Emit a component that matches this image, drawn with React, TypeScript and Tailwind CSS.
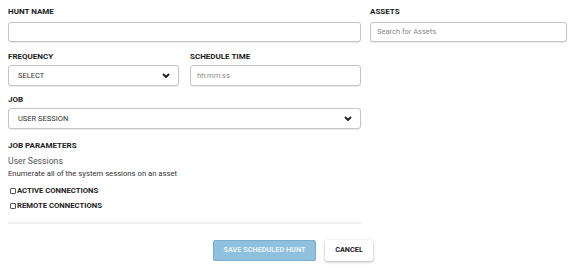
import React from 'react';

const font = { fontFamily: 'Roboto, "Liberation Sans", sans-serif' };

function Label({ children }: { children: React.ReactNode }) {
  return <p className="text-[8px] font-bold uppercase leading-[9px] text-[#222]">{children}</p>;
}

function Chevron() {
  return (
    <svg width="8" height="6" viewBox="0 0 8 6" className="shrink-0">
      <polyline points="1.5,1.5 4,4 6.5,1.5" fill="none" stroke="#222" strokeWidth="1.9" strokeLinecap="round" strokeLinejoin="round" />
    </svg>
  );
}

function SelectBox({ value, className }: { value: string; className: string }) {
  return (
    <div className={`flex h-[21px] items-center justify-between rounded-[3px] border border-[#c4c4c4] bg-white pl-[9px] pr-[8px] shadow-[0_1px_1px_rgba(0,0,0,0.08)] ${className}`}>
      <span className="text-[7.5px] uppercase text-[#333]">{value}</span>
      <Chevron />
    </div>
  );
}

function TextBox({ placeholder, className }: { placeholder?: string; className: string }) {
  return (
    <div className={`flex h-[20px] items-center rounded-[3px] border border-[#c4c4c4] bg-white px-[6px] shadow-[0_1px_1px_rgba(0,0,0,0.08)] ${className}`}>
      <span className="text-[7.5px] text-[#8a8a8a]">{placeholder}</span>
    </div>
  );
}

function Check({ label }: { label: string }) {
  return (
    <div className="flex items-center gap-[1px]">
      <span className="ml-[2px] h-[6px] w-[6px] rounded-[1px] border border-[#555] bg-white" />
      <span className="text-[7.7px] font-bold uppercase leading-[9px] text-[#222]">{label}</span>
    </div>
  );
}

export default function App() {
  return (
    <div className="h-[271px] w-[588px] bg-white pl-[8px] pt-[7px]" style={font}>
      <div className="flex gap-[9px]">
        <div className="flex w-[353px] flex-col">
          <Label>Hunt Name</Label>
          <TextBox className="mt-[6px] w-[353px]" />

          <div className="mt-[10px] flex gap-[11px]">
            <div className="flex flex-col">
              <Label>Frequency</Label>
              <SelectBox value="Select" className="mt-[4px] w-[171px]" />
            </div>
            <div className="flex flex-col">
              <Label>Schedule Time</Label>
              <TextBox placeholder="hh:mm:ss" className="mt-[4px] h-[21px] w-[171px]" />
            </div>
          </div>

          <div className="mt-[9px]">
            <Label>Job</Label>
          </div>
          <SelectBox value="User Session" className="mt-[4px] w-[353px]" />

          <div className="mt-[12px]">
            <Label>Job Parameters</Label>
          </div>
          <p className="mt-[5px] text-[8.7px] leading-[12px] text-[#555]">User Sessions</p>
          <p className="mt-[2px] text-[7.7px] leading-[9px] text-[#333]">Enumerate all of the system sessions on an asset</p>
          <div className="mt-[8px] flex flex-col gap-[6px]">
            <Check label="Active Connections" />
            <Check label="Remote Connections" />
          </div>
          <div className="mt-[12px] h-[2px] w-[353px] bg-[#f0f0f0]" />
        </div>

        <div className="flex w-[197px] flex-col">
          <Label>Assets</Label>
          <TextBox placeholder="Search for Assets" className="mt-[6px] w-[197px]" />
        </div>
      </div>

      <div className="mt-[16px] flex w-[365px] justify-end gap-[9px]">
        <button type="button" className="h-[21px] w-[103px] rounded-[2px] border border-[#79aed0] bg-[#8fc0de] text-[7.3px] font-bold uppercase text-[#eaf4fa]">
          Save Scheduled Hunt
        </button>
        <button type="button" className="h-[21px] w-[48px] rounded-[2px] bg-white text-[7.3px] font-bold uppercase text-[#222] shadow-[0_1px_3px_rgba(0,0,0,0.3)]">
          Cancel
        </button>
      </div>
    </div>
  );
}
